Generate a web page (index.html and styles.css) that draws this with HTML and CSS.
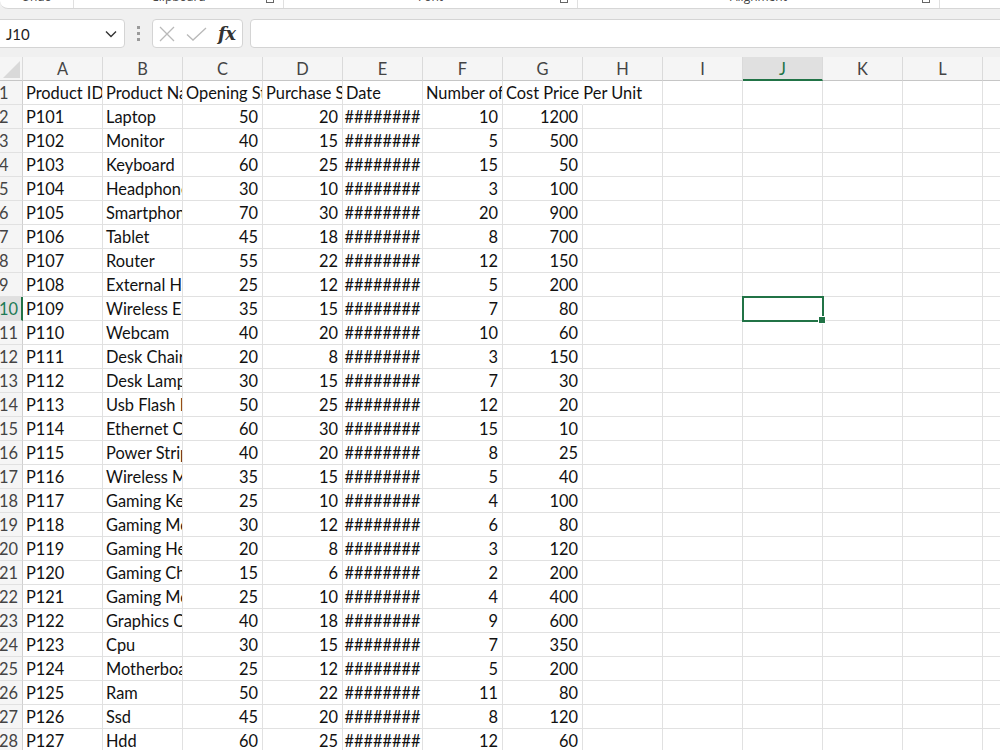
FILE: index.html
```html
<!DOCTYPE html>
<html lang="en">
<head>
    <meta charset="UTF-8">
    <title>Inventory - Excel</title>
    <link rel="stylesheet" href="styles.css">
</head>
<body>
    <div class="ribbon">
        <div class="group group-undo"><span class="group-label">Undo</span></div>
        <div class="group group-clip"><span class="group-label">Clipboard</span><span class="launcher"></span></div>
        <div class="group group-font"><span class="group-label">Font</span><span class="launcher"></span></div>
        <div class="group group-align"><span class="group-label">Alignment</span><span class="launcher"></span></div>
    </div>

    <div class="formula-bar">
        <div class="name-box">
            <span>J10</span>
            <svg class="chevron" width="12" height="8" viewBox="0 0 12 8"><path d="M1 1.5 L6 6.5 L11 1.5" fill="none" stroke="#333" stroke-width="1.4"/></svg>
        </div>
        <div class="grip"><i></i><i></i><i></i></div>
        <div class="fx-box">
            <svg width="16" height="16" viewBox="0 0 16 16"><path d="M1 1 L15 15 M15 1 L1 15" stroke="#b9b9b9" stroke-width="1.3"/></svg>
            <svg width="21" height="14" viewBox="0 0 21 14"><path d="M1 7.5 L7 13 L20 1" fill="none" stroke="#b9b9b9" stroke-width="1.3"/></svg>
            <span class="fx">fx</span>
        </div>
        <div class="formula-input"></div>
    </div>

    <div class="sheet">
        <table class="grid">
            <colgroup>
                <col class="col-rowhead">
                <col span="13" class="col-cell">
            </colgroup>
            <thead>
                <tr>
                    <th class="corner"><span class="corner-tri"></span></th>
                    <th>A</th><th>B</th><th>C</th><th>D</th><th>E</th><th>F</th><th>G</th>
                    <th>H</th><th>I</th><th class="sel-col">J</th><th>K</th><th>L</th><th>M</th>
                </tr>
            </thead>
            <tbody id="rows">
                <tr>
                    <th>1</th>
                    <td>Product ID</td><td>Product Name</td><td>Opening Stock</td><td>Purchase Stock</td>
                    <td>Date</td><td>Number of Units Sold</td><td class="spill">Cost Price Per Unit</td>
                    <td></td><td></td><td></td><td></td><td></td><td></td>
                </tr>
            </tbody>
        </table>
    </div>

    <script>
        var data = [
            ['P101', 'Laptop', 50, 20, 10, 1200],
            ['P102', 'Monitor', 40, 15, 5, 500],
            ['P103', 'Keyboard', 60, 25, 15, 50],
            ['P104', 'Headphones', 30, 10, 3, 100],
            ['P105', 'Smartphone', 70, 30, 20, 900],
            ['P106', 'Tablet', 45, 18, 8, 700],
            ['P107', 'Router', 55, 22, 12, 150],
            ['P108', 'External Hard Drive', 25, 12, 5, 200],
            ['P109', 'Wireless Earbuds', 35, 15, 7, 80],
            ['P110', 'Webcam', 40, 20, 10, 60],
            ['P111', 'Desk Chair', 20, 8, 3, 150],
            ['P112', 'Desk Lamp', 30, 15, 7, 30],
            ['P113', 'Usb Flash Drive', 50, 25, 12, 20],
            ['P114', 'Ethernet Cable', 60, 30, 15, 10],
            ['P115', 'Power Strip', 40, 20, 8, 25],
            ['P116', 'Wireless Mouse', 35, 15, 5, 40],
            ['P117', 'Gaming Keyboard', 25, 10, 4, 100],
            ['P118', 'Gaming Mouse', 30, 12, 6, 80],
            ['P119', 'Gaming Headset', 20, 8, 3, 120],
            ['P120', 'Gaming Chair', 15, 6, 2, 200],
            ['P121', 'Gaming Monitor', 25, 10, 4, 400],
            ['P122', 'Graphics Card', 40, 18, 9, 600],
            ['P123', 'Cpu', 30, 15, 7, 350],
            ['P124', 'Motherboard', 25, 12, 5, 200],
            ['P125', 'Ram', 50, 22, 11, 80],
            ['P126', 'Ssd', 45, 20, 8, 120],
            ['P127', 'Hdd', 60, 25, 12, 60]
        ];

        var tbody = document.getElementById('rows');
        data.forEach(function(r, i) {
            var rowNum = i + 2;
            var tr = document.createElement('tr');
            var html = '<th' + (rowNum === 10 ? ' class="sel-row"' : '') + '>' + rowNum + '</th>';
            html += '<td>' + r[0] + '</td>';
            html += '<td>' + r[1] + '</td>';
            html += '<td class="num">' + r[2] + '</td>';
            html += '<td class="num">' + r[3] + '</td>';
            html += '<td class="date">########</td>';
            html += '<td class="num">' + r[4] + '</td>';
            html += '<td class="num">' + r[5] + '</td>';
            for (var c = 0; c < 6; c++) {
                html += '<td' + (rowNum === 10 && c === 2 ? ' class="active"' : '') + '></td>';
            }
            tr.innerHTML = html;
            tbody.appendChild(tr);
        });
    </script>
</body>
</html>
```

FILE: styles.css
```css
* {
    margin: 0;
    padding: 0;
    box-sizing: border-box;
}

body {
    font-family: Lato, "Liberation Sans", sans-serif;
    background: #f0f0f0;
    width: 1000px;
    height: 750px;
    overflow: hidden;
}

/* ribbon strip cut off at the top */
.ribbon {
    height: 9px;
    background: #fff;
    border-bottom: 1px solid #d6d6d6;
    border-radius: 0 0 0 8px;
    display: flex;
    overflow: hidden;
    font-family: "Open Sans", sans-serif;
    font-size: 12px;
    color: #444;
}

.group {
    position: relative;
    display: flex;
    justify-content: center;
    border-right: 1px solid #e0e0e0;
    height: 8px;
}

.group-label {
    line-height: 12px;
    margin-top: -9px;
}

.group-undo { width: 74px; }
.group-clip { width: 210px; }
.group-font { width: 294px; }
.group-align { width: 362px; }

.launcher {
    position: absolute;
    right: 9px;
    top: -4px;
    width: 8px;
    height: 7px;
    border: 1px solid #666;
    border-top: none;
}

/* name box + formula input */
.formula-bar {
    height: 48px;
    display: flex;
    align-items: flex-start;
    padding-top: 10px;
}

.name-box {
    width: 131px;
    height: 29px;
    margin-left: -6px;
    background: #fff;
    border: 1px solid #d4d4d4;
    border-radius: 4px;
    display: flex;
    align-items: center;
    justify-content: space-between;
    padding: 0 7px 0 11px;
    font-size: 15px;
    color: #222;
}

.chevron {
    margin-top: 1px;
}

.grip {
    width: 27px;
    height: 29px;
    display: flex;
    flex-direction: column;
    align-items: center;
    justify-content: center;
    gap: 3px;
}

.grip i {
    width: 3px;
    height: 3px;
    background: #9a9a9a;
}

.fx-box {
    width: 91px;
    height: 29px;
    background: #fff;
    border: 1px solid #d4d4d4;
    border-radius: 4px;
    display: flex;
    align-items: center;
    padding-left: 6px;
    gap: 11px;
}

.fx {
    font-family: "DejaVu Serif", serif;
    font-style: italic;
    font-weight: bold;
    font-size: 18px;
    color: #333;
    letter-spacing: -0.5px;
}

.formula-input {
    flex: 1;
    height: 29px;
    margin-left: 7px;
    margin-right: -6px;
    background: #fff;
    border: 1px solid #d4d4d4;
    border-radius: 4px;
}

/* worksheet grid */
.sheet {
    background: #fff;
    overflow: hidden;
    height: 693px;
}

.grid {
    table-layout: fixed;
    border-collapse: separate;
    border-spacing: 0;
    width: 1063px;
    font-size: 16.4px;
    color: #111;
}

.col-rowhead { width: 23px; }
.col-cell { width: 80px; }

.grid th,
.grid td {
    height: 24px;
    border-right: 1px solid #e1e1e1;
    border-bottom: 1px solid #e1e1e1;
    white-space: nowrap;
    overflow: hidden;
    line-height: 22px;
    padding-top: 1px;
}

.grid td {
    padding-left: 3px;
    padding-right: 3px;
    text-align: left;
}

.grid thead th {
    background: #f5f5f5;
    font-weight: normal;
    color: #444;
    text-align: center;
    border-right-color: #dadada;
    border-bottom: 1px solid #c6c6c6;
}

.grid tbody th {
    background: #f5f5f5;
    font-weight: normal;
    color: #444;
    text-align: left;
    text-indent: -1px;
    overflow: visible;
    border-right-color: #d0d0d0;
    border-bottom-color: #e1e1e1;
}

.grid thead th.corner {
    position: relative;
    overflow: hidden;
}

.corner-tri {
    position: absolute;
    right: 2px;
    bottom: 2px;
    width: 0;
    height: 0;
    border-left: 17px solid transparent;
    border-bottom: 17px solid #d9d9d9;
}

.grid thead th.sel-col {
    background: #e0e0e0;
    color: #217346;
    border-bottom: 2px solid #217346;
    line-height: 21px;
}

.grid tbody th.sel-row {
    color: #1d7a55;
    border-right: 2px solid #217346;
    background: #e0e0e0;
}

.grid td.num {
    text-align: right;
    padding-right: 4px;
}

.grid td.date {
    text-align: center;
    padding-left: 0;
    padding-right: 0;
}

.grid td.spill {
    overflow: visible;
    border-right-color: transparent;
}

.grid td.active {
    position: relative;
    overflow: visible;
    outline: 2px solid #217346;
    outline-offset: -1px;
}

.grid td.active::after {
    content: "";
    position: absolute;
    right: -4px;
    bottom: -4px;
    width: 6px;
    height: 6px;
    background: #217346;
    border: 1px solid #fff;
}
```
